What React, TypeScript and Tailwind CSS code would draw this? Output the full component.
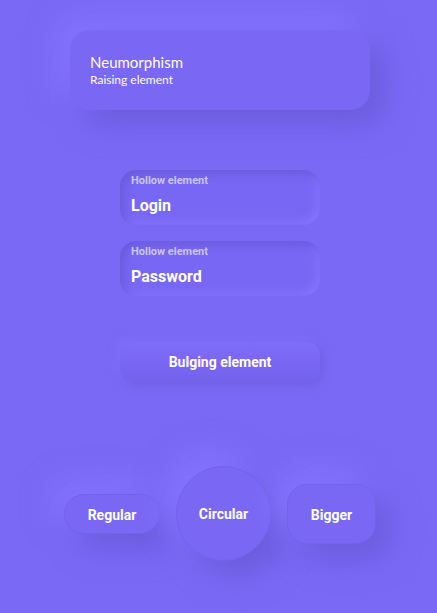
export default function App() {
  const raised =
    "bg-[#7a68f5] border border-[#7363ec] shadow-[14px_14px_30px_#6c5cdc,-12px_-12px_30px_#8775ff]";
  const hollow =
    "bg-[#7866f4] shadow-[inset_4px_4px_8px_#6b5bdb,inset_-4px_-4px_8px_#8675ff]";

  return (
    <div
      className="flex min-h-[613px] w-full flex-col items-center bg-[#7a69f5] pl-[3px] text-white"
      style={{ fontFamily: "Roboto, 'Liberation Sans', sans-serif" }}
    >
      {/* card */}
      <div
        className="mt-[30px] flex h-[80px] w-[300px] flex-col justify-center rounded-[20px] bg-[#7a68f5] px-[20px] pb-[1px] shadow-[14px_14px_30px_#6c5cdc,-12px_-12px_30px_#8775ff]"
        style={{ fontFamily: "Lato, 'Noto Sans', sans-serif" }}
      >
        <div className="text-[15px] leading-[19px] text-white">Neumorphism</div>
        <div className="text-[12px] leading-[15px] text-white">Raising element</div>
      </div>

      {/* inputs */}
      <div className="mt-[60px] flex flex-col gap-[16px]">
        {["Login", "Password"].map((v) => (
          <div
            key={v}
            className={`flex h-[55px] w-[200px] flex-col rounded-[16px] px-[11px] pt-[4px] ${hollow}`}
          >
            <div className="text-[11px] font-bold leading-[13px] text-[#cbc5ec]">
              Hollow element
            </div>
            <div className="mt-[9px] text-[16px] font-bold leading-[20px] text-white">
              {v}
            </div>
          </div>
        ))}
      </div>

      {/* bulging */}
      <div className="mt-[46px]">
        <div className="flex h-[40px] w-[200px] items-center justify-center rounded-[13px] bg-[linear-gradient(180deg,#7f6cfb,#7462ec)] text-[14px] font-bold shadow-[3px_3px_8px_#7060e2,-3px_-3px_8px_#8270fc]">
          Bulging element
        </div>
      </div>

      {/* buttons */}
      <div className="mt-[84px] flex items-center gap-[16px]">
        <div
          className={`flex h-[40px] w-[96px] items-center justify-center rounded-full pt-[4px] text-[14px] font-bold ${raised}`}
        >
          Regular
        </div>
        <div
          className={`flex h-[95px] w-[95px] items-center justify-center rounded-full pt-[2px] text-[14px] font-bold ${raised}`}
        >
          Circular
        </div>
        <div
          className={`flex h-[60px] w-[89px] items-center justify-center rounded-[20px] pt-[4px] text-[14px] font-bold ${raised}`}
        >
          Bigger
        </div>
      </div>
    </div>
  );
}
